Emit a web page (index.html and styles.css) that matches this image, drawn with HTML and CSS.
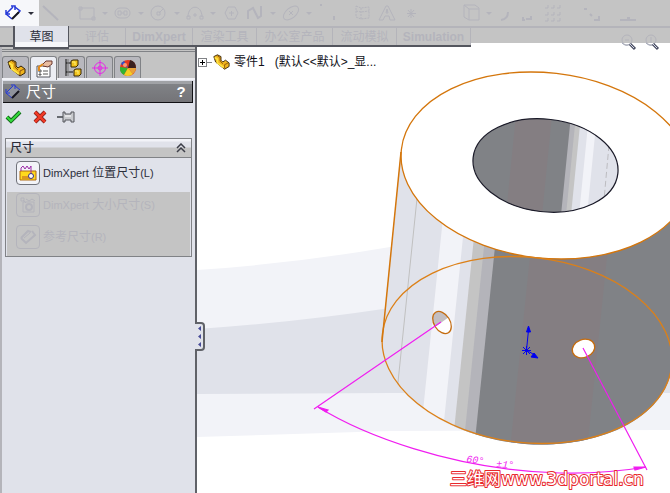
FILE: index.html
```html
<!doctype html>
<html lang="zh-CN">
<head>
  <meta charset="UTF-8"/>
  <meta name="viewport" content="width=device-width, initial-scale=1.0"/>
  <title>零件1</title>
  <link rel="stylesheet" href="styles.css">
</head>
<body>
  <header class="ribbon">
    <div class="toolbar">
      <button class="tool tool-current" aria-label="智能尺寸">
        <svg width="16" height="16" viewBox="0 0 16 16"><path d="M1 9L9 1l6 5-8 8z" fill="#fff"/><path d="M2 8l6-6M1 5v4h4M6 1h4v4" stroke="#2438d8" stroke-width="1.500"/><path d="M10 2l5 4-3 3M1 9l6 5" stroke="#2438d8" stroke-width="1.500"/><path d="M7 14l7-7" stroke="#15151f" stroke-width="2"/></svg>
        <i class="drop"></i>
      </button>
      <button class="tool" aria-label="直线"><svg width="20" height="20"><path d="M2 3l15 14" stroke-width="2"/></svg></button><button class="more" aria-label="更多直线"></button>
      <button class="tool" aria-label="矩形"><svg width="20" height="20"><path d="M3 5h14v11H3zM2 4h3v3H2zM15 14h3v3h-3z"/></svg></button><button class="more" aria-label="更多矩形"><i class="drop"></i></button>
      <button class="tool" aria-label="槽口"><svg width="20" height="20"><rect x="2" y="5" width="15" height="10" rx="5"/><path d="M5 8h3v4H5zM11 8h3v4h-3zM8 10h3"/></svg></button><button class="more" aria-label="更多槽口"><i class="drop"></i></button>
      <button class="tool" aria-label="圆"><svg width="20" height="20"><circle cx="9" cy="10" r="7"/><path d="M8 9h3v3H8zM10 10l4-4"/></svg></button><button class="more" aria-label="更多圆"><i class="drop"></i></button>
      <button class="tool" aria-label="圆弧"><svg width="20" height="20"><path d="M3 14C3 1 17 1 17 14M2 13h3v3H2zM15 13h3v3h-3zM8 12h4M10 10v4"/></svg></button><button class="more" aria-label="更多圆弧"><i class="drop"></i></button>
      <button class="tool" aria-label="多边形"><svg width="20" height="20"><path d="M7 4h7l3 6-3 6H7l-3-6zM8 10h5M10.500 8v5"/></svg></button>
      <button class="tool" aria-label="样条曲线"><svg width="20" height="20"><path d="M3 16V8l5-3 5 10 3-2V3" stroke-width="2"/></svg></button><button class="more" aria-label="更多样条"><i class="drop"></i></button>
      <button class="tool" aria-label="椭圆"><svg width="20" height="20"><ellipse cx="10" cy="10" rx="9" ry="5" transform="rotate(-40 10 10)"/><path d="M8 8l4 4M12 8l-4 4"/></svg></button><button class="more" aria-label="更多椭圆"><i class="drop"></i></button>
      <button class="tool" aria-label="圆角"><svg width="20" height="20"><path d="M17 13v4M3 2h2" stroke-width="2"/></svg></button>
      <span class="space"></span>
      <button class="tool" aria-label="基准面"><svg width="20" height="20"><path d="M3 3l5 2 8-1v11l-8 1-5-2zM3 8l5 1 8-1M8 5v11" stroke-dasharray="2 1"/></svg></button>
      <button class="tool" aria-label="文字"><svg width="20" height="20"><path d="M2 17l7-14h2l7 14h-5l-1-4H8l-2 4zM9 10l1-4 1 4z"/></svg></button>
      <button class="tool" aria-label="点"><svg width="20" height="20"><path d="M10 6v9M6 10.500h9M7 7l6 7M13 7l-6 7"/></svg></button>
      <span class="space space-wide"></span>
      <button class="tool" aria-label="转换实体"><svg width="20" height="20"><path d="M3 2h11l4 3v12H8L3 14zM3 2l5 4h10M8 6v11"/></svg></button><button class="more" aria-label="更多转换"><i class="drop"></i></button>
      <button class="tool" aria-label="等距实体"><svg width="20" height="20"><path d="M4 17q7-1 7-8" stroke-width="2"/></svg></button>
      <button class="tool" aria-label="镜向"><svg width="20" height="20"><path d="M2 14v3h2M5 16h5v-3" stroke-width="2"/></svg></button>
      <button class="tool" aria-label="线性阵列"><svg width="20" height="20"><path d="M0 5h3V2M6 5h3V2M12 5h3V2M0 12h3V9M6 12h3V9M12 12h3V9M0 18h3v-3M6 18h3v-3M12 18h3v-3"/></svg></button>
      <span class="space"></span>
      <button class="tool" aria-label="显示关系"><svg width="20" height="20"><path d="M3 6h3M9 11l2 2M13 17h5v-4" stroke-width="2"/></svg></button>
      <span class="space"></span>
      <button class="tool" aria-label="修复草图"><svg width="20" height="20"><path d="M3 17h16M10 15h3" stroke-width="2"/></svg></button>
    </div>
    <div class="tab-row">
      <nav class="tabs">
        <span class="stub"></span>
        <a href="#" class="tab active">草图</a>
        <a href="#" class="tab w-eval">评估</a>
        <a href="#" class="tab w-dim"><b>DimXpert</b></a>
        <a href="#" class="tab w-render">渲染工具</a>
        <a href="#" class="tab w-office">办公室产品</a>
        <a href="#" class="tab w-render">流动模拟</a>
        <a href="#" class="tab w-sim"><b>Simulation</b></a>
      </nav>
      <div class="view-tools">
        <svg width="52" height="20" viewBox="618 33 52 20" fill="none">
          <g stroke="#b4b4bc"><circle cx="627" cy="40" r="5"/><circle cx="651" cy="40" r="5"/><path d="M625 40h4M651 37v6"/></g>
          <path d="M622 43q4 4 8 1M646 43q4 4 8 1" stroke="#a4a8b8"/>
          <path d="M630 44l5 5M653 44l5 5" stroke="#4c5064" stroke-width="3"/>
          <path d="M630 44l4 4M653 44l4 4" stroke="#d4d8e8"/>
        </svg>
      </div>
    </div>
  </header>

  <main class="workspace">
    <aside class="panel">
      <div class="panel-tabs">
        <button class="ptab" aria-label="设计树">
          <svg width="20" height="20"><path d="M2 4l4-2 4 2v4l2 2 3-2 4 3v4l-5 3L4 10z" fill="#f0b41c" stroke="#35240b"/><path d="M3 5l3 2v4l7 5" fill="none" stroke="#ffe343" stroke-width="2"/><path d="M6 3l3 2v4l3 3M14 17v-4l4-2" fill="none" stroke="#8a5510"/></svg>
        </button>
        <button class="ptab selected" aria-label="属性">
          <svg width="20" height="20"><path d="M3 7h13v11H3z" fill="#fff" stroke="#54565e"/><path d="M5 11h2v2H5zM5 15h2v1H5zM9 12h5M9 15h5" fill="none" stroke="#555"/><path d="M8 6l4-4h6v3l-4 3-5-1" fill="#e8bca0" stroke="#6c3830"/><path d="M5 12V8l4-3" fill="none" stroke="#e28a1c" stroke-width="2"/></svg>
        </button>
        <button class="ptab" aria-label="配置">
          <svg width="20" height="20"><path d="M4 1v17M4 5h5M4 14h7" fill="none" stroke="#111"/><path d="M6 1v17" stroke="#777"/><path d="M9 3l2-1h5v5l-2 2H9zM12 12l2-1h5v5l-2 2h-5z" fill="#f1c21c" stroke="#3a2806"/><path d="M10 4h3v3M13 13h3v3" fill="none" stroke="#fff17a"/></svg>
        </button>
        <button class="ptab" aria-label="DimXpert 管理">
          <svg width="20" height="20" fill="none" stroke="#e52be5"><circle cx="10" cy="10" r="5.500"/><circle cx="10" cy="10" r="2"/><path d="M10 2v16M2 10h16"/></svg>
        </button>
        <button class="ptab" aria-label="显示管理">
          <svg width="20" height="20"><circle cx="10" cy="10" r="8" fill="#e43a20"/><path d="M10 10L2 9a8 8 0 0 0 4 8z" fill="#32b432"/><path d="M10 10L3 6a8 8 0 0 1 3-3z" fill="#2654d4"/><path d="M10 10l-4 7a8 8 0 0 0 9-1z" fill="#f4cf25"/><path d="M10 10l5 6a8 8 0 0 0 3-6z" fill="#e8a23a"/><path d="M10 10h8a8 8 0 0 0-6-8z" fill="#3b2020"/><circle cx="7" cy="7" r="2" fill="#ff9a70"/></svg>
        </button>
      </div>

      <div class="title-bar">
        <svg width="16" height="16" viewBox="0 0 16 16" fill="none"><path d="M1 9L9 1l6 5-8 8z" fill="#8e929c"/><path d="M2 8l6-6M1 5v4h4M6 1h4v4M1 9l6 5M10 2l5 4" stroke="#2438d8"/><path d="M7 14l7-7" stroke="#15151f" stroke-width="2"/></svg>
        <h1>尺寸</h1>
        <button class="help" aria-label="帮助">?</button>
      </div>

      <div class="actions">
        <button aria-label="确定"><svg width="18" height="16"><path d="M2 8l4 4L15 3" fill="none" stroke="#12641a" stroke-width="4"/><path d="M2 8l4 4L15 3" fill="none" stroke="#35dc3c" stroke-width="2"/></svg></button>
        <button aria-label="取消"><svg width="18" height="16"><path d="M4 3l10 10M14 3L4 13" stroke="#7c1812" stroke-width="4"/><path d="M4 3l10 10M14 3L4 13" stroke="#f03a26" stroke-width="2.500"/></svg></button>
        <button aria-label="保持可见"><svg width="20" height="16"><path d="M0 8h8" stroke="#666a70" stroke-width="2"/><path d="M6 3h2v2h6V3h3v10h-3v-2H8v2H6z" fill="#c8cace" stroke="#54565c"/><path d="M8 7h6" stroke="#fff"/></svg></button>
      </div>

      <section class="group">
        <h2>尺寸
          <svg width="10" height="10" fill="none" stroke="#3c3e48"><path d="M1 5l4-4 4 4M1 9l4-4 4 4" stroke-width="1.500"/></svg>
        </h2>
        <button class="option">
          <span class="box"><svg width="18" height="18"><path d="M1 7h16v9H1z" fill="#ffd91c" stroke="#b06a10"/><path d="M3 12h8v3H3z" fill="#dc9820"/><path d="M2 7V4l2-2 2 3 2-3 2 3 2-3v8" fill="none" stroke="#9c2aa8"/><circle cx="12" cy="12" r="2.500" fill="#fff" stroke="#3a3080"/></svg></span>
          <span><span class="latin">DimXpert</span> 位置尺寸<span class="latin">(L)</span></span>
        </button>
        <div class="muted">
          <button class="option" disabled>
            <span class="box"><svg width="18" height="18" fill="none" stroke="#b4b4bc"><path d="M4 6h11v10H4zM2 2h3v3H2zM4 4l3 3M7 3l3 2 3-2 3 2"/><circle cx="10" cy="11" r="3" stroke-width="2"/></svg></span>
            <span><span class="latin">DimXpert</span> 大小尺寸<span class="latin">(S)</span></span>
          </button>
          <button class="option" disabled>
            <span class="box"><svg width="18" height="18" fill="none" stroke="#b4b4bc"><path d="M2 10l7-7 3 1M2 10l5 5 9-8-3-4" stroke-width="2"/><path d="M5 10l6-5"/></svg></span>
            <span>参考尺寸<span class="latin">(R)</span></span>
          </button>
        </div>
      </section>

      <button class="collapse" aria-label="收起面板">
        <svg width="5" height="21" fill="#484c98"><path d="M4 0v5L1 2.500zM4 8v5l-3-2.500zM4 16v5l-3-2.500z"/></svg>
      </button>
    </aside>

    <section class="viewport">
      <svg class="scene" viewBox="197 47 473 446" preserveAspectRatio="xMinYMin slice">
        <defs>
          <clipPath id="body-clip"><path d="M401 150L382 340A145.500 92.650 6.430 0 0 672 362L691 175z"/></clipPath>
          <clipPath id="bore-clip"><ellipse cx="545.500" cy="165.500" rx="72.800" ry="46.300" transform="rotate(6.430 545.500 165.500)"/></clipPath>
          <clipPath id="pin-clip"><ellipse cx="442" cy="322.500" rx="12" ry="8" transform="rotate(58 442 322.500)"/></clipPath>
        </defs>

        <!-- floor reflections -->
        <path d="M197 270Q290 264 390 247L680 210V430L390 431 197 437z" fill="#f2f3f8"/>
        <path d="M197 329Q290 323 390 308L680 270V393H390L197 394z" fill="#e0e2ea"/>

        <!-- cylinder side -->
        <g clip-path="url(#body-clip)">
          <path d="M370 140h330v320H370z" fill="#e0e2ea"/>
          <path d="M422 150l-31 300" stroke="#c0c0c0"/>
          <path d="M450 150h22l-31 300h-22z" fill="#f2f3f8"/>
          <path d="M483 150h12l-31 300h-12z" fill="#c4c4c4"/>
          <path d="M494 150h12l-31 300h-12z" fill="#b4b4ba"/>
          <path d="M505 150h200v300H474z" fill="#808286"/>
          <path d="M541 150h77l-31 300h-77z" fill="#847e82"/>
        </g>
        <ellipse cx="546" cy="165.500" rx="145.500" ry="92.650" transform="rotate(6.430 546 165.500)" fill="#fff" stroke="#d4760c" stroke-width="1.300"/>
        <ellipse cx="527" cy="350" rx="145.500" ry="92.650" transform="rotate(6.430 527 350)" fill="none" stroke="#dc8018" stroke-width="1.300"/>
        <path d="M401 152L382 342" stroke="#d4760c" stroke-width="1.500"/>

        <!-- bore -->
        <g clip-path="url(#bore-clip)">
          <path d="M470 115h150v100H470z" fill="#808286"/>
          <path d="M516 115h36l-10 100h-36z" fill="#847e82"/>
          <path d="M571 115h60v100h-70z" fill="#b4b4ba"/>
          <path d="M576 115h60v100h-70z" fill="#c4c4c4"/>
          <path d="M581 115h60v100h-70z" fill="#e0e2ea"/>
          <path d="M589 115h8l-10 100h-8z" fill="#f2f3f8"/>
          <path d="M609 145l-5 55" stroke="#bcbcc0" stroke-dasharray="6 3"/>
        </g>
        <ellipse cx="545.500" cy="165.500" rx="72.800" ry="46.300" transform="rotate(6.430 545.500 165.500)" fill="none" stroke="#1a1a28" stroke-width="1.200"/>

        <!-- cross holes -->
        <g clip-path="url(#pin-clip)"><path d="M425 305h35v35h-35z" fill="#fff"/><path d="M428 305h20l1 12-14 10h-7z" fill="#c2bec2"/></g>
        <ellipse cx="442" cy="322.500" rx="12" ry="8" transform="rotate(58 442 322.500)" fill="none" stroke="#c46c10" stroke-width="1.300"/>
        <ellipse cx="583.500" cy="348.500" rx="11.500" ry="9" transform="rotate(-20 583.500 348.500)" fill="#fff" stroke="#c46c10" stroke-width="1.300"/>

        <!-- origin -->
        <g stroke="#0000f0" fill="#0000f0"><path d="M526.500 350l2-20M526.500 350l8 5M522 350.500h9M523 347l7 7M530 347l-7 7M526.500 346v9"/><path d="M528.500 326l2 6h-4zM538 358l-7-1 3-4z"/></g>

        <!-- angle dimension -->
        <g stroke="#f01ef0" stroke-width="1.200" fill="none">
          <path d="M441 322L314 409M583 348l64 122"/>
          <path d="M318 407C360 433 450 470 560 473Q605 474 646 467"/>
          <path d="M318 407l10 3-2 2zM646 467l-12 0 1 3z" fill="#f01ef0"/>
        </g>
        <g class="dimension">
          <text x="466" y="462" transform="rotate(7 466 462)">60°</text>
          <text x="496" y="467" transform="rotate(4 496 467)">±1°</text>
        </g>
        <text class="watermark" x="450" y="485">三维网www.3dportal.cn</text>
      </svg>

      <div class="tree">
        <button class="expand" aria-label="展开"></button>
        <span class="branch"></span>
        <svg width="18" height="18" viewBox="0 0 20 20"><path d="M2 4l4-2 4 2v4l2 2 3-2 4 3v4l-5 3L4 10z" fill="#f0b41c" stroke="#35240b"/><path d="M3 5l3 2v4l7 5" fill="none" stroke="#ffe343" stroke-width="2"/><path d="M6 3l3 2v4l3 3M14 17v-4l4-2" fill="none" stroke="#8a5510"/></svg>
        <span class="part">零件1&nbsp;&nbsp;&nbsp;(默认&lt;&lt;默认&gt;_显...</span>
      </div>
    </section>
  </main>
</body>
</html>
```
FILE: styles.css
```css
* {
  box-sizing: border-box;
}

body {
  margin: 0;
  min-height: 100vh;
  display: flex;
  flex-direction: column;
  overflow: hidden;
  background: #fff;
  font-family: "Liberation Sans", "Noto Sans CJK SC", sans-serif;
  font-size: 12px;
  line-height: 16px;
  color: #2c2e3a;
}

button {
  margin: 0;
  padding: 0;
  border: 0;
  background: none;
  font: inherit;
  color: inherit;
}

svg {
  display: block;
  flex: none;
}

/* ribbon */
.ribbon {
  position: relative;
  z-index: 2;
}

.toolbar {
  display: flex;
  height: 28px;
  overflow: hidden;
  background: #c4c4c4;
  border-bottom: 2px solid #b4b4ba;
}

.tool {
  flex: none;
  width: 24px;
  display: flex;
  align-items: center;
  justify-content: center;
  color: #b4b4bc;
}

.tool svg {
  fill: none;
  stroke: #b4b4bc;
}

.tool-current {
  width: 39px;
  gap: 7px;
  background: #f6f7fa;
  color: #2c2e3a;
}

.tool-current svg {
  stroke: none;
}

.more {
  flex: none;
  width: 12px;
  display: flex;
  align-items: center;
  justify-content: center;
  color: #b4b4bc;
}

.drop {
  border: 3px solid transparent;
  border-top-color: currentColor;
  border-bottom: 0;
}

.space {
  flex: none;
  width: 12px;
}

.space-wide {
  width: 36px;
}

.tab-row {
  display: flex;
  align-items: flex-start;
  height: 19px;
}

.tabs {
  display: flex;
  height: 19px;
  background: #c4c4c4;
  border-bottom: 2px solid #54565e;
}

.stub {
  width: 13px;
}

.tab {
  border-right: 1px solid #b4b4ba;
  text-align: center;
  line-height: 18px;
  color: #b4b4bc;
  text-decoration: none;
}

.tab.active {
  width: 56px;
  height: 23px;
  margin-top: -2px;
  line-height: 23px;
  background: linear-gradient(#e0e2ea 75%, #f6f7fa 75%);
  border: solid #54565e;
  border-width: 0 1px 2px 2px;
  color: #2c2e3a;
}

.w-eval {
  width: 57px;
}

.w-dim {
  width: 67px;
}

.w-render {
  width: 64px;
}

.w-office {
  width: 76px;
}

.w-sim {
  width: 74px;
}

.view-tools {
  flex: 1;
  height: 15px;
  display: flex;
  justify-content: flex-end;
  padding-top: 5px;
  background: #c4c4c4;
}

/* left panel */
.workspace {
  flex: 1;
  display: flex;
}

.panel {
  position: relative;
  z-index: 1;
  flex: none;
  width: 197px;
  background: #e0e2ea;
  border-left: 2px solid #b4b4ba;
  border-right: 2px solid #606268;
}

.panel-tabs {
  display: flex;
  gap: 1px;
  height: 33px;
  padding-top: 9px;
  background: linear-gradient(#c4c4c4 2px, #808286 2px, #808286 3px, #c4c4c4 3px, #c4c4c4 4px, #808286 4px, #808286 5px, #c4c4c4 5px);
  border-bottom: 2px solid #f2f3f8;
}

.ptab {
  width: 27px;
  height: 22px;
  display: flex;
  align-items: center;
  justify-content: center;
  border: 1px solid #808286;
  border-bottom: 0;
  border-radius: 3px 3px 0 0;
  background: #b8b8be;
}

.ptab.selected {
  height: 24px;
  background: #eceef4;
}

.title-bar {
  display: flex;
  align-items: center;
  gap: 5px;
  height: 22px;
  margin: 1px 2px 0 1px;
  padding: 0 4px 0 2px;
  background: linear-gradient(#a0a2a6 3px, #808286 3px, #747478);
  border: solid #101014;
  border-width: 0 1px 1px 0;
  color: #fff;
}

.title-bar h1 {
  margin: 0;
  font-size: 15px;
  line-height: 20px;
  font-weight: normal;
}

.help {
  width: 14px;
  margin-left: auto;
  font-size: 15px;
  font-weight: bold;
}

.actions {
  display: flex;
  gap: 8px;
  padding: 6px 3px;
}

.group {
  margin: 7px 3px 0;
  border: 1px solid #808286;
}

.group h2 {
  display: flex;
  align-items: center;
  justify-content: space-between;
  height: 19px;
  margin: 0;
  padding: 0 5px 0 4px;
  background: linear-gradient(#f2f3f8 2px, #e0e2ea 3px, #e0e2ea 8px, #c4c4c4 9px);
  border-bottom: 1px solid #808286;
  font-size: 12px;
  font-weight: 500;
}

.option {
  display: flex;
  align-items: center;
  gap: 3px;
  width: 100%;
  height: 30px;
  padding-left: 10px;
  text-align: left;
  white-space: nowrap;
}

.option .box {
  width: 24px;
  height: 24px;
  display: flex;
  align-items: center;
  justify-content: center;
  border: 1px solid #70727a;
  border-radius: 4px;
  background: #f2f3f8;
}

.latin {
  font-size: 11px;
}

.muted {
  display: flex;
  flex-direction: column;
  gap: 6px;
  margin: 4px 1px 0;
  padding-bottom: 6px;
  background: #c4c4c4;
}

.muted .option {
  height: 26px;
  padding-left: 9px;
  color: #b4b4bc;
}

.muted .box {
  border-color: #b4b4bc;
  background: none;
}

/* sits on the border between panel and viewport */
.collapse {
  position: absolute;
  top: 275px;
  right: -10px;
  width: 10px;
  height: 29px;
  display: flex;
  align-items: center;
  justify-content: center;
  background: #e0e2ea;
  border: 2px solid #606268;
  border-left: 0;
  border-radius: 0 4px 4px 0;
}

/* model view */
.viewport {
  position: relative;
  flex: 1;
  min-width: 0;
  overflow: hidden;
}

.scene {
  position: absolute;
  width: 100%;
  height: 100%;
}

.tree {
  position: relative;
  display: flex;
  align-items: center;
  padding: 6px 1px;
  color: #101018;
  white-space: nowrap;
}

.expand {
  width: 9px;
  height: 9px;
  border: 1px solid #808286;
  background: linear-gradient(#000, #000) center / 5px 1px no-repeat, linear-gradient(#000, #000) center / 1px 5px no-repeat;
}

.branch {
  width: 5px;
  height: 1px;
  background: #808286;
}

.part {
  padding-left: 4px;
}

.dimension {
  font-family: "Liberation Mono", monospace;
  font-size: 10px;
  font-style: italic;
  fill: #f01ef0;
}

.watermark {
  font-family: "DejaVu Sans", "Noto Sans CJK SC", sans-serif;
  font-size: 17px;
  fill: #fff;
  stroke: #e8282c;
  stroke-width: 2px;
  stroke-linejoin: round;
  paint-order: stroke;
}
```
